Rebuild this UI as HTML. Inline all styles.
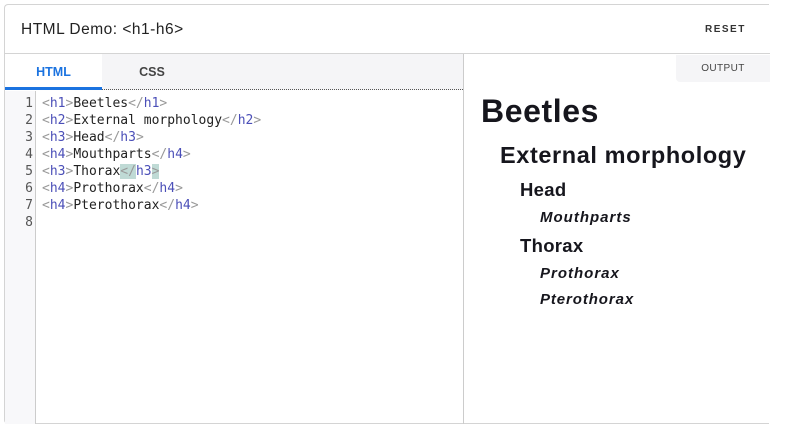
<!DOCTYPE html>
<html><head><style>
*{margin:0;padding:0;box-sizing:border-box}
body{width:798px;height:432px;background:#fff;font-family:"Liberation Sans",sans-serif;position:relative;overflow:hidden}
.card{position:absolute;left:4px;top:4px;width:765px;height:420px;border:1px solid #d4d4d4;border-right:none;border-radius:4px 0 0 4px}
.hdr{position:absolute;left:0;top:0;width:765px;height:49px;border-bottom:1px solid #d4d4d4}
.title{position:absolute;left:16px;top:16px;font-size:15.5px;color:#222;letter-spacing:.5px}
.reset{position:absolute;left:700px;top:19px;font-size:10px;letter-spacing:1.5px;color:#333;font-weight:bold}
.tabs{position:absolute;left:0;top:49px;width:458px;height:36px;background:#f5f5f7;border-bottom:1px dotted #555}
.tab1{position:absolute;left:0;top:0;width:97px;height:36px;background:#fff;border-bottom:3px solid #1b73e0;color:#1b73e0;font-size:12.5px;font-weight:bold;text-align:center;line-height:36px}
.tab2{position:absolute;left:97px;top:0;width:100px;height:36px;color:#444;font-size:12.5px;font-weight:bold;text-align:center;line-height:36px}
.gut{position:absolute;left:0;top:86px;width:31px;height:333px;background:#f8f8fa;border-right:1px solid #ccc}
.ln{position:absolute;left:0;top:90px;width:28px;text-align:right;font:13px/17px "DejaVu Sans Mono",monospace;color:#555}
.code{position:absolute;left:37px;top:90px;font:13px/17px "DejaVu Sans Mono",monospace;color:#222;white-space:pre}
.p{color:#999}.t{color:#4b4fb8}.hl{background:#bfdad5}
.div{position:absolute;left:458px;top:49px;width:1px;height:370px;background:#ccc}
.out{position:absolute;left:671px;top:50px;width:94px;height:27px;background:#f5f5f7;border-radius:0 0 0 4px;font-size:10px;color:#444;text-align:center;line-height:27px;letter-spacing:.4px}
.o{position:absolute;font-weight:bold;color:#16161d;white-space:nowrap}
</style></head><body>
<div class="card">
<div class="hdr"><div class="title">HTML Demo: &lt;h1-h6&gt;</div><div class="reset">RESET</div></div>
<div class="tabs"><div class="tab1">HTML</div><div class="tab2">CSS</div></div>
<div class="gut"></div>
<div class="ln">1<br>2<br>3<br>4<br>5<br>6<br>7<br>8</div>
<div class="code"><span class="p">&lt;</span><span class="t">h1</span><span class="p">&gt;</span>Beetles<span class="p">&lt;/</span><span class="t">h1</span><span class="p">&gt;</span>
<span class="p">&lt;</span><span class="t">h2</span><span class="p">&gt;</span>External morphology<span class="p">&lt;/</span><span class="t">h2</span><span class="p">&gt;</span>
<span class="p">&lt;</span><span class="t">h3</span><span class="p">&gt;</span>Head<span class="p">&lt;/</span><span class="t">h3</span><span class="p">&gt;</span>
<span class="p">&lt;</span><span class="t">h4</span><span class="p">&gt;</span>Mouthparts<span class="p">&lt;/</span><span class="t">h4</span><span class="p">&gt;</span>
<span class="p">&lt;</span><span class="t">h3</span><span class="p">&gt;</span>Thorax<span class="p hl">&lt;/</span><span class="t">h3</span><span class="p hl">&gt;</span>
<span class="p">&lt;</span><span class="t">h4</span><span class="p">&gt;</span>Prothorax<span class="p">&lt;/</span><span class="t">h4</span><span class="p">&gt;</span>
<span class="p">&lt;</span><span class="t">h4</span><span class="p">&gt;</span>Pterothorax<span class="p">&lt;/</span><span class="t">h4</span><span class="p">&gt;</span>
</div>
<div class="div"></div>
<div class="out">OUTPUT</div>
<div class="o" style="left:476px;top:88px;font-size:32px;letter-spacing:.6px">Beetles</div>
<div class="o" style="left:495px;top:137px;font-size:23.5px;letter-spacing:.6px">External morphology</div>
<div class="o" style="left:515px;top:174px;font-size:18.5px;letter-spacing:.3px">Head</div>
<div class="o" style="left:535px;top:204px;font-size:15px;font-style:italic;letter-spacing:1px">Mouthparts</div>
<div class="o" style="left:515px;top:230px;font-size:18.5px;letter-spacing:.3px">Thorax</div>
<div class="o" style="left:535px;top:260px;font-size:15px;font-style:italic;letter-spacing:1px">Prothorax</div>
<div class="o" style="left:535px;top:286px;font-size:15px;font-style:italic;letter-spacing:.9px">Pterothorax</div>
</div>
</body></html>
